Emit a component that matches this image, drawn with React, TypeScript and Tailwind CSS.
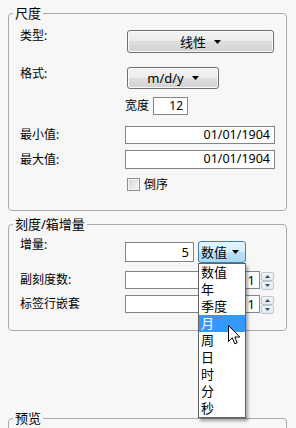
const Tri = ({ up = false, color = "#000", w = 7, h = 4 }: { up?: boolean; color?: string; w?: number; h?: number }) => (
  <svg width={w} height={h} viewBox={`0 0 ${w} ${h}`}>
    <path d={up ? `M0 ${h}H${w}L${w / 2} 0z` : `M0 0H${w}L${w / 2} ${h}z`} fill={color} />
  </svg>
);

const btn =
  "flex items-center justify-center gap-[8px] rounded-[3px] border border-[#707070] bg-[linear-gradient(#f3f3f3_0%,#ececec_50%,#dedede_50%,#d2d2d2_100%)] shadow-[inset_0_0_0_1px_#fbfbfb] text-[13px] text-black";
const input = "flex items-center justify-end border border-[#858585] bg-white pr-[4px] text-[12.5px] leading-none";

function Spin() {
  return (
    <div className="ml-[1px] mt-[1px] flex w-[13px] flex-col self-start">
      {[true, false].map((up) => (
        <div key={String(up)}
          className="flex h-[9px] items-center justify-center rounded-[2px] border border-[#b9c6d5] bg-[linear-gradient(#f7fafd,#dfe8f1)]">
          <Tri up={up} w={5} h={3} color="#33476b" />
        </div>
      ))}
    </div>
  );
}

function Group({ title, children, className = "" }: { title: string; children?: React.ReactNode; className?: string }) {
  return (
    <fieldset className={`w-[279px] rounded-[4px] border border-[#a9a9a9] ${className}`}>
      <legend className="ml-[4px] px-[2px] text-[13px] leading-[16px]">{title}</legend>
      {children}
    </fieldset>
  );
}

const items = ["数值", "年", "季度", "月", "周", "日", "时", "分", "秒"];

export default function App() {
  return (
    <div className="relative h-[428px] w-[296px] overflow-hidden bg-[#f7f7f7] pl-[8px] pt-[5px] font-['Noto_Sans','Noto_Sans_CJK_SC',sans-serif] text-[12px] leading-[16px] text-black">
      <Group title="尺度">
        <div className="pl-[11px] pb-[19px] pt-[9px]">
          <div className="flex h-[23px]">
            <span className="-mt-[2px] w-[107px] shrink-0">类型:</span>
            <div className={`${btn} w-[147px]`}>线性 <Tri /></div>
          </div>
          <div className="mt-[14px] flex h-[22px]">
            <span className="-mt-[1px] w-[107px] shrink-0">格式:</span>
            <div className={`${btn} w-[92px]`}>m/d/y <Tri /></div>
          </div>
          <div className="mt-[8px] flex h-[18px] items-center">
            <span className="w-[105px] shrink-0" />
            <span>宽度</span>
            <div className={`${input} ml-[4px] h-[18px] w-[35px] text-[12px]`}>12</div>
          </div>
          <div className="mt-[11px] flex h-[18px] items-center">
            <span className="w-[105px] shrink-0">最小值:</span>
            <div className={`${input} h-[18px] w-[150px]`}>01/01/1904</div>
          </div>
          <div className="mt-[6px] flex h-[19px] items-center">
            <span className="w-[105px] shrink-0">最大值:</span>
            <div className={`${input} h-[19px] w-[150px]`}>01/01/1904</div>
          </div>
          <div className="mt-[9px] flex h-[13px] items-center">
            <span className="w-[107px] shrink-0" />
            <div className="h-[13px] w-[13px] border border-[#8f8f8f] bg-[linear-gradient(135deg,#d4d4d4,#f7f7f7)] shadow-[inset_0_0_0_1px_#f4f4f4]" />
            <span className="ml-[4px]">倒序</span>
          </div>
        </div>
      </Group>

      <Group title="刻度/箱增量" className="mt-[5px]">
        <div className="pl-[11px] pb-[17px] pt-[9px]">
          <div className="flex h-[22px] items-center">
            <span className="-mt-[4px] w-[105px] shrink-0 self-start">增量:</span>
            <div className={`${input} h-[20px] w-[69px] text-[13px]`}>5</div>
            <div className="relative ml-[4px]">
              <div className="flex h-[22px] w-[48px] items-center justify-between rounded-[3px] border border-[#3c7fb1] bg-[linear-gradient(#e6f5fd_0%,#d6effc_50%,#b9e0f6_50%,#a9d8f3_100%)] pl-[2px] pr-[6px] text-[13px]">
                数值 <Tri />
              </div>
              <div className="absolute left-0 top-[22px] z-10 w-[48px] border border-[#646464] bg-white text-[13px] shadow-[2px_3px_3px_rgba(0,0,0,0.35)]">
                {items.map((t) => (
                  <div key={t} className={`h-[17px] pl-[2px] leading-[17px] ${t === "月" ? "bg-[#3399ff] text-white" : ""}`}>{t}</div>
                ))}
                <svg className="absolute left-[29px] top-[61px]" width="13" height="20" viewBox="0 0 13 20">
                  <path d="M0.5 0.5V16.5L4.3 12.8L6.8 18.8L9.2 17.8L6.8 12H11.8Z" fill="#fff" stroke="#000" strokeWidth="1" strokeLinejoin="round" />
                </svg>
              </div>
            </div>
          </div>
          <div className="mt-[8px] flex h-[18px] items-center">
            <span className="w-[105px] shrink-0">副刻度数:</span>
            <div className={`${input} h-[18px] w-[135px] text-[13px]`}>1</div>
            <Spin />
          </div>
          <div className="mt-[6px] flex h-[18px] items-center">
            <span className="w-[105px] shrink-0">标签行嵌套</span>
            <div className={`${input} h-[18px] w-[135px] text-[13px]`}>1</div>
            <Spin />
          </div>
        </div>
      </Group>

      <Group title="预览" className="mt-[79px] h-[60px]" />
    </div>
  );
}
